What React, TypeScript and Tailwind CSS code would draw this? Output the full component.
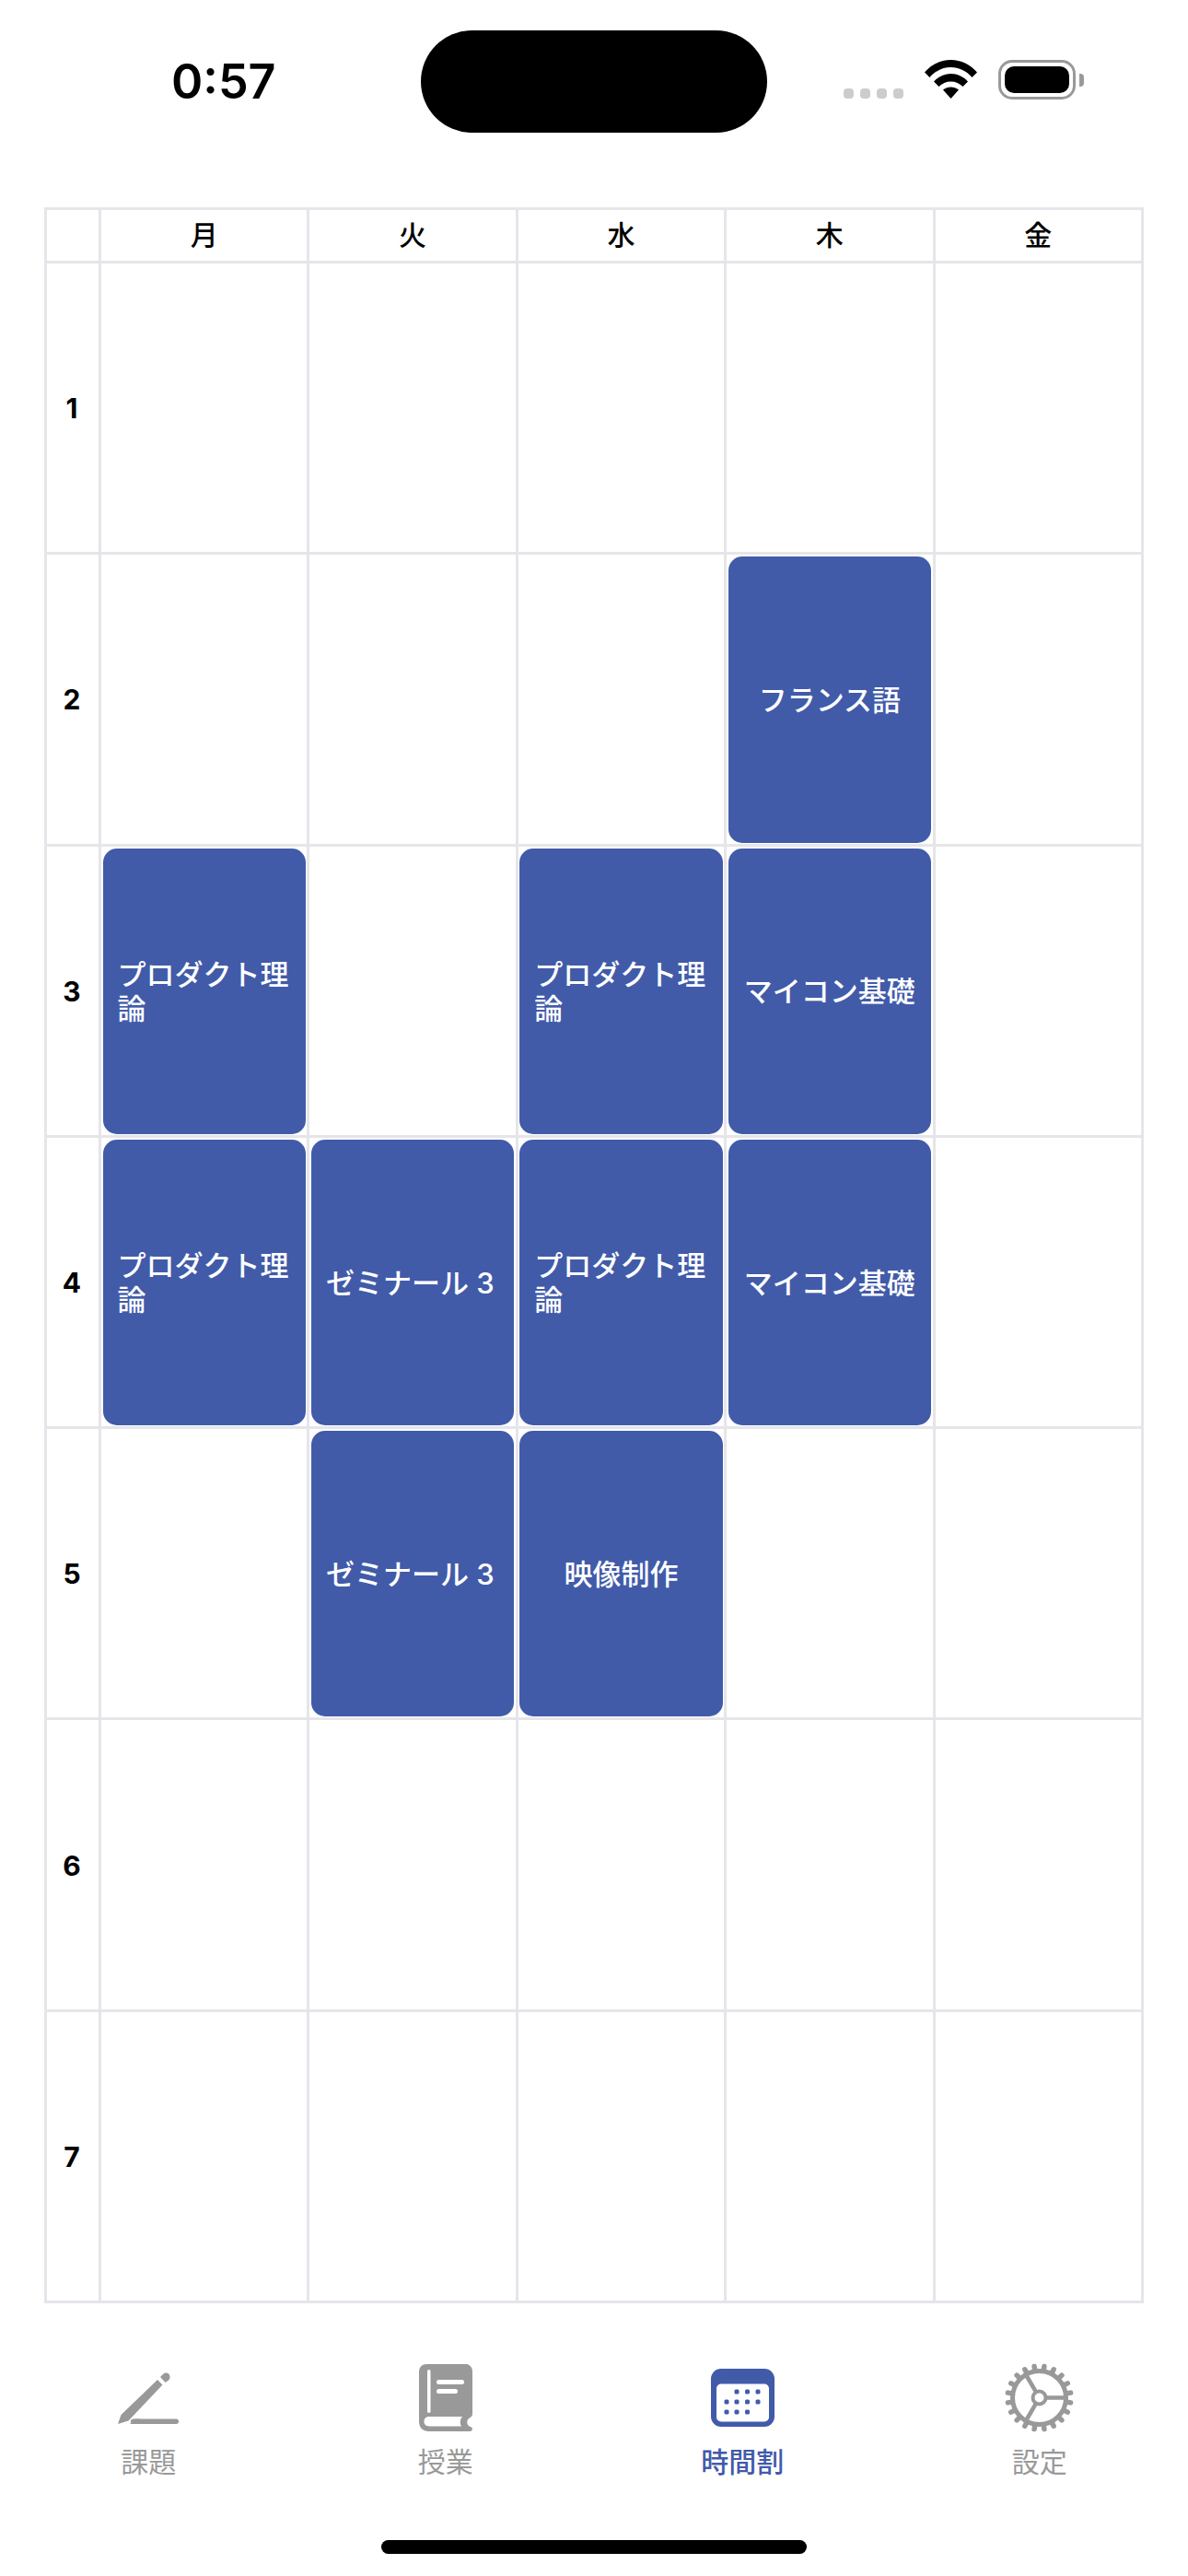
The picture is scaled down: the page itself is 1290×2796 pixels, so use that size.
const jp = "font-['Inter','Noto_Sans_CJK_JP',sans-serif]";

const days = ["月", "火", "水", "木", "金"];

// 時限ごとのコマ
const rows: string[][] = [
  ["", "", "", "", ""],
  ["", "", "", "フランス語", ""],
  ["プロダクト理論", "", "プロダクト理論", "マイコン基礎", ""],
  ["プロダクト理論", "ゼミナール 3", "プロダクト理論", "マイコン基礎", ""],
  ["", "ゼミナール 3", "映像制作", "", ""],
  ["", "", "", "", ""],
  ["", "", "", "", ""],
];

function Wifi() {
  return (
    <svg width="57" height="42" viewBox="0 0 57 42" fill="#000">
      <path d="M0 13.5C7.5 5 17.5 0 28.5 0S49.500 5 57 13.500L51.500 19C45.500 12 37.500 8 28.500 8S11.500 12 5.500 19Z" />
      <path d="M10 23.500C15 18 21.500 15 28.500 15S42 18 47 23.500L41.500 29C38 25.500 33.500 23.500 28.500 23.500S19 25.500 15.500 29Z" />
      <path d="M20 32.500C22.500 30.500 25.500 29.500 28.500 29.500S34.500 30.500 37 32.500L28.500 42Z" />
    </svg>
  );
}

function Battery() {
  return (
    <div className="flex items-center gap-[4px]">
      <div className="w-[84px] h-[43px] rounded-[15px] border-[3px] border-[#999999] p-[4px]">
        <div className="w-full h-full rounded-[10px] bg-black" />
      </div>
      <div className="w-[5px] h-[14px] rounded-r-[4px] bg-[#999999]" />
    </div>
  );
}

function PencilIcon() {
  return (
    <svg width="66" height="56" viewBox="0 0 66 56" fill="#999999">
      <path d="M0 56L3.500 46L43 8L48.500 13.500L11.500 52.500Z" />
      <path d="M46 5L49 2C51 0 53.500 0 55 1.500L55.500 2C57 4 57 6.500 55 8.500L51.500 11Z" />
      <rect x="14" y="50.500" width="52" height="5.500" rx="2.750" />
      <path d="M13 56L19 50.500H24V56Z" />
    </svg>
  );
}

function BookIcon() {
  return (
    <svg width="58" height="73" viewBox="0 0 58 73">
      <path
        fill="#999999"
        d="M9 0H50C55 0 58 3 58 8V54C58 56 57 57 55.500 58C52 60 51.500 63 53 66C54 67.500 56 68 57.500 69C58.500 71 57.500 73 55 73H11C4 73 0 69 0 62V9C0 3 3 0 9 0Z"
      />
      <rect x="9" y="6" width="3.500" height="47" rx="1.750" fill="#fff" />
      <rect x="19" y="17" width="30" height="5" rx="2.500" fill="#fff" />
      <rect x="19" y="27" width="23" height="5" rx="2.500" fill="#fff" />
      <path
        fill="#fff"
        d="M11 57H47C44.500 60 44 64 46 67.500H11C7.500 67.500 5.500 65.500 5.500 62.300S7.500 57 11 57Z"
      />
    </svg>
  );
}

function CalendarIcon() {
  const dots = [
    [28, 25], [39.500, 25], [51, 25],
    [17, 36], [28, 36], [39.500, 36], [51, 36],
    [17, 47], [28, 47], [39.500, 47],
  ];
  return (
    <svg width="69" height="63" viewBox="0 0 69 63">
      <rect width="69" height="63" rx="11" fill="#415ba9" />
      <rect x="6" y="16.500" width="57" height="41" rx="5" fill="#fff" />
      {dots.map(([x, y]) => (
        <rect key={`${x}-${y}`} x={x - 2.500} y={y - 2.500} width="5" height="5" rx="1.500" fill="#415ba9" />
      ))}
    </svg>
  );
}

function GearIcon() {
  const teeth = Array.from({ length: 20 }, (_, i) => i * 18 + 9);
  return (
    <svg width="75" height="75" viewBox="0 0 75 75" fill="none" stroke="#999999">
      {teeth.map((a) => (
        <line key={a} x1="37.500" y1="7" x2="37.500" y2="3" strokeWidth="5.500" strokeLinecap="round" transform={`rotate(${a} 37.500 37.500)`} />
      ))}
      <circle cx="37.500" cy="37.500" r="29" strokeWidth="5" />
      <circle cx="37.500" cy="37.500" r="7" strokeWidth="4" />
      <path d="M44.500 37.500H66M34 31.400L23 12.500M34 43.600L23 62.500" strokeWidth="4.500" />
    </svg>
  );
}

function Tab({ label, icon, active }: { label: string; icon: React.ReactNode; active?: boolean }) {
  return (
    <div className="flex flex-col items-center">
      <div className="h-[75px] flex items-center justify-center">{icon}</div>
      <div className={`mt-[15px] text-[30px] leading-[35px] ${active ? "font-medium text-[#415ba9]" : "text-[#999999]"}`}>
        {label}
      </div>
    </div>
  );
}

function Lesson({ name }: { name: string }) {
  const long = name.length > 6;
  return (
    <div
      className={`flex-1 min-h-0 ml-[1.500px] mr-[1.500px] mt-[2px] mb-[1px] rounded-[15px] bg-[#415ba9] flex items-center px-[16px] text-white text-[31px] leading-[37px] font-medium ${
        long ? "justify-start" : "justify-center text-center"
      }`}
    >
      {name}
    </div>
  );
}

export default function App() {
  return (
    <div className={`w-[1290px] h-[2796px] bg-white overflow-hidden ${jp}`}>
      <div className="flex h-[225px]">
        <div className="w-[457px] pl-[186px] pt-[59px] text-[52px] leading-[60px] font-semibold text-black">0:57</div>
        <div className="mt-[33px] w-[376px] h-[111px] rounded-full bg-black" />
        <div className="pl-[83px] pt-[65px] flex items-start">
          <div className="flex gap-[7px] mt-[31px]">
            <div className="w-[11px] h-[11px] rounded-[4px] bg-[#cccccc]" />
            <div className="w-[11px] h-[11px] rounded-[4px] bg-[#cccccc]" />
            <div className="w-[11px] h-[11px] rounded-[4px] bg-[#cccccc]" />
            <div className="w-[11px] h-[11px] rounded-[4px] bg-[#cccccc]" />
          </div>
          <div className="ml-[23px]">
            <Wifi />
          </div>
          <div className="ml-[23px]">
            <Battery />
          </div>
        </div>
      </div>

      <div className="ml-[48px] w-[1194px] grid grid-cols-[56px_repeat(5,223.400px)] grid-rows-[55px_repeat(7,313.300px)] gap-[3px] p-[3px] bg-[#e5e5ea] text-black">
        <div className="bg-white" />
        {days.map((d) => (
          <div key={d} className="bg-white flex items-center justify-center text-[30px] font-medium">
            {d}
          </div>
        ))}
        {rows.map((row, i) => (
          <div key={i} className="contents">
            <div className="bg-white flex items-center justify-center pr-[2px] pt-[2px] text-[30px] font-bold">{i + 1}</div>
            {row.map((name, j) => (
              <div key={j} className="bg-white min-h-0 flex flex-col">
                {name && <Lesson name={name} />}
              </div>
            ))}
          </div>
        ))}
      </div>

      <div className="mt-[65px] grid grid-cols-4">
        <Tab label="課題" icon={<PencilIcon />} />
        <Tab label="授業" icon={<BookIcon />} />
        <Tab label="時間割" icon={<CalendarIcon />} active />
        <Tab label="設定" icon={<GearIcon />} />
      </div>
      <div className="mt-[67px] mx-auto w-[462px] h-[15px] rounded-full bg-black" />
    </div>
  );
}
